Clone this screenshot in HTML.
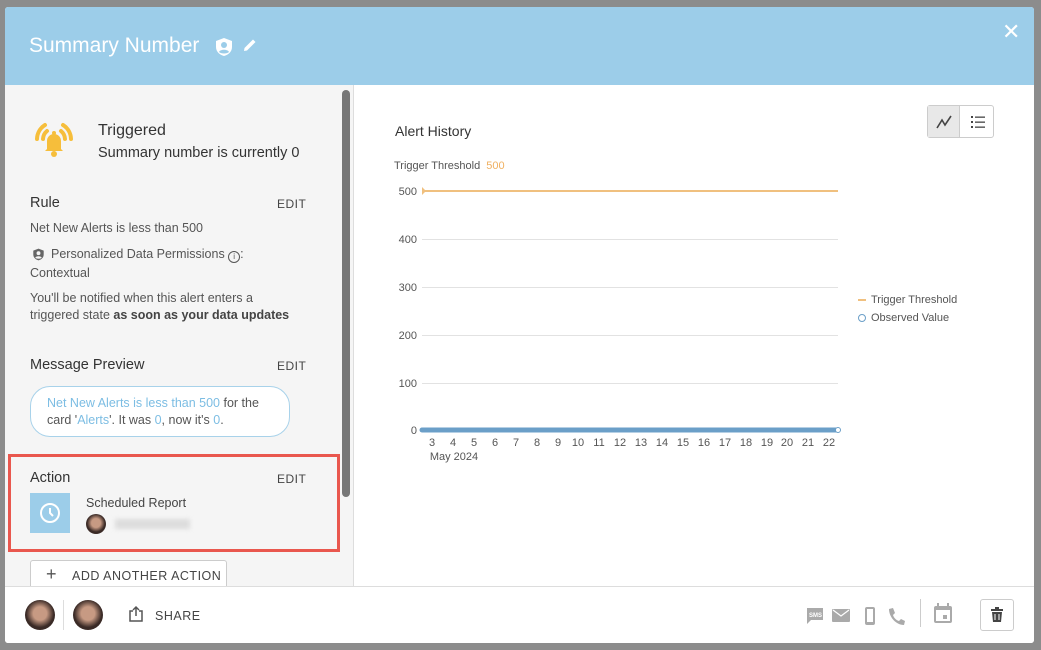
<!DOCTYPE html>
<html><head><meta charset="utf-8"><style>
*{margin:0;padding:0;box-sizing:border-box}
body{width:1041px;height:650px;background:#8c8c8c;font-family:"Liberation Sans",sans-serif;position:relative;overflow:hidden;color:#333}
.a{position:absolute;white-space:nowrap}
#m{position:absolute;left:5px;top:7px;width:1029px;height:636px;background:#fff;border-radius:3px;overflow:hidden}
#hd{position:absolute;left:0;top:0;width:1029px;height:78px;background:#9ccde9}
#lp{position:absolute;left:0;top:78px;width:349px;height:501px;background:#f5f5f5;border-right:1px solid #ddd}
#ft{position:absolute;left:0;top:579px;width:1029px;height:57px;background:#fff;border-top:1px solid #ddd}
.t{font-size:14.5px;color:#333}
.s{font-size:12.5px;color:#555}
.e{font-size:12px;color:#444;letter-spacing:.5px}
</style></head><body>
<div id="m">
 <div id="hd">
  <div class="a" style="left:24px;top:27px;font-size:21px;color:#fff">Summary Number</div>
  <svg class="a" style="left:209px;top:30px" width="20" height="20" viewBox="0 0 20 20"><path d="M10 1 L18 4 V10 C18 15 14 18 10 19 C6 18 2 15 2 10 V4Z" fill="#fff"/><circle cx="10" cy="8" r="3" fill="#9ccde9"/><path d="M5 15 C6 12 14 12 15 15 C13 17 7 17 5 15Z" fill="#9ccde9"/></svg>
  <svg class="a" style="left:237px;top:30px" width="16" height="16" viewBox="0 0 16 16"><path d="M2 14 L2.5 11 L11 2.5 L13.5 5 L5 13.5Z" fill="#fff"/></svg>
  <div class="a" style="left:997px;top:12px;font-size:22px;color:#fff">✕</div>
 </div>
 <div id="lp">
  <svg class="a" style="left:24px;top:32px" width="50" height="44" viewBox="0 0 50 44"><g fill="none" stroke="#f6be3b" stroke-width="4" stroke-linecap="round"><path d="M8 22 A17 17 0 0 1 16 8"/><path d="M42 22 A17 17 0 0 0 34 8"/><path d="M14 22 A11 11 0 0 1 18 14"/><path d="M36 22 A11 11 0 0 0 32 14"/></g><path d="M18 32 V24 A7 7 0 0 1 32 24 V32 L34 34 H16Z" fill="#f6be3b"/><circle cx="25" cy="37" r="3" fill="#f6be3b"/><circle cx="25" cy="16" r="2" fill="#f6be3b"/></svg>
  <div class="a" style="left:93px;top:37px;font-size:16px;color:#333">Triggered</div>
  <div class="a" style="left:93px;top:60px;font-size:14.5px;color:#333">Summary number is currently 0</div>
  <div class="a t" style="left:25px;top:110px">Rule</div>
  <div class="a e" style="left:272px;top:112px">EDIT</div>
  <div class="a s" style="left:25px;top:136px">Net New Alerts is less than 500</div>
  <svg class="a" style="left:27px;top:163px" width="13" height="13" viewBox="0 0 20 20"><path d="M10 1 L18 4 V10 C18 15 14 18 10 19 C6 18 2 15 2 10 V4Z" fill="#666"/><circle cx="10" cy="8" r="3" fill="#f5f5f5"/><path d="M5 15 C6 12 14 12 15 15 C13 17 7 17 5 15Z" fill="#f5f5f5"/></svg>
  <div class="a s" style="left:46px;top:162px">Personalized Data Permissions <span style="display:inline-block;width:12px;height:12px;border:1.3px solid #555;border-radius:50%;font-size:8px;text-align:center;line-height:10px;vertical-align:-1px">i</span>:</div>
  <div class="a s" style="left:25px;top:181px">Contextual</div>
  <div class="a s" style="left:25px;top:206px">You'll be notified when this alert enters a</div>
  <div class="a s" style="left:25px;top:223px">triggered state <b style="color:#444">as soon as your data updates</b></div>
  <div class="a t" style="left:25px;top:272px">Message Preview</div>
  <div class="a e" style="left:272px;top:274px">EDIT</div>
  <div class="a" style="left:25px;top:301px;width:260px;height:51px;border:1px solid #a8d2ea;border-radius:20px;background:#fff"></div>
  <div class="a s" style="left:42px;top:310px;line-height:17px">
   <span style="color:#7cbde3">Net New Alerts is less than 500</span> for the<br>card '<span style="color:#7cbde3">Alerts</span>'. It was <span style="color:#7cbde3">0</span>, now it's <span style="color:#7cbde3">0</span>.</div>
  <div class="a" style="left:3px;top:369px;width:332px;height:98px;border:3px solid #e9574e"></div>
  <div class="a t" style="left:25px;top:385px">Action</div>
  <div class="a e" style="left:272px;top:387px">EDIT</div>
  <div class="a" style="left:25px;top:408px;width:40px;height:40px;background:#9ccde9"></div>
  <svg class="a" style="left:33px;top:416px" width="24" height="24" viewBox="0 0 24 24"><circle cx="12" cy="12" r="9" fill="none" stroke="#fff" stroke-width="2"/><path d="M12 7 V12 L15 15" fill="none" stroke="#fff" stroke-width="2"/></svg>
  <div class="a s" style="left:81px;top:411px;color:#444">Scheduled Report</div>
  <div class="a" style="left:81px;top:429px;width:20px;height:20px;border-radius:50%;background:radial-gradient(circle at 50% 45%,#c79a83 30%,#3a2a26 60%)"></div>
  <div class="a" style="left:110px;top:434px;width:75px;height:10px;background:#ddd;filter:blur(2px)"></div>
  <div class="a" style="left:25px;top:475px;width:197px;height:30px;border:1px solid #ccc;border-radius:3px;background:#fff"></div>
  <div class="a" style="left:41px;top:479px;font-size:18px;color:#555">+</div>
  <div class="a e" style="left:67px;top:484px;font-size:12.5px">ADD ANOTHER ACTION</div>
  <div class="a" style="left:337px;top:5px;width:8px;height:407px;border-radius:4px;background:#777"></div>
 </div>
 <div class="a" style="left:390px;top:116px;font-size:14px;color:#333">Alert History</div>
 <div class="a" style="left:922px;top:98px;width:67px;height:33px;border:1px solid #ccc;border-radius:3px"></div>
 <div class="a" style="left:923px;top:99px;width:32px;height:31px;background:#e8e8e8;border-right:1px solid #ccc"></div>
 <svg class="a" style="left:929px;top:105px" width="20" height="20" viewBox="0 0 20 20"><path d="M3 16 L8 8 L11 13 L17 4" fill="none" stroke="#444" stroke-width="1.6"/></svg>
 <svg class="a" style="left:963px;top:105px" width="20" height="20" viewBox="0 0 20 20"><g fill="#444"><rect x="3" y="4" width="2" height="2"/><rect x="3" y="9" width="2" height="2"/><rect x="3" y="14" width="2" height="2"/><rect x="7" y="4.5" width="10" height="1.3"/><rect x="7" y="9.5" width="10" height="1.3"/><rect x="7" y="14.5" width="10" height="1.3"/></g></svg>
 <div class="a" style="left:389px;top:153px;font-size:11px;color:#555">Trigger Threshold <span style="color:#f0b060;margin-left:3px">500</span></div>
 <svg class="a" style="left:370px;top:163px" width="480" height="300" viewBox="375 170 480 300">
  <g stroke="#e2e2e2" stroke-width="1"><line x1="422" x2="838" y1="239.5" y2="239.5"/><line x1="422" x2="838" y1="287.5" y2="287.5"/><line x1="422" x2="838" y1="335.5" y2="335.5"/><line x1="422" x2="838" y1="383.5" y2="383.5"/></g>
  <g font-family="Liberation Sans" font-size="11" fill="#555" text-anchor="end"><text x="417" y="195">500</text><text x="417" y="243">400</text><text x="417" y="291">300</text><text x="417" y="339">200</text><text x="417" y="387">100</text><text x="417" y="434">0</text></g>
  <line x1="422" x2="838" y1="191" y2="191" stroke="#f0c07f" stroke-width="2"/>
  <path d="M422 187 L426 191 L422 195Z" fill="#f0c07f"/>
  <line x1="422" x2="838" y1="430" y2="430" stroke="#6b9fc8" stroke-width="5" stroke-linecap="round"/>
  <circle cx="838" cy="430" r="2.5" fill="#fff" stroke="#6b9fc8"/>
  <g font-family="Liberation Sans" font-size="11" fill="#555" text-anchor="middle">
   <text x="432" y="446">3</text><text x="453" y="446">4</text><text x="474" y="446">5</text><text x="495" y="446">6</text><text x="516" y="446">7</text><text x="537" y="446">8</text><text x="558" y="446">9</text><text x="578" y="446">10</text><text x="599" y="446">11</text><text x="620" y="446">12</text><text x="641" y="446">13</text><text x="662" y="446">14</text><text x="683" y="446">15</text><text x="704" y="446">16</text><text x="725" y="446">17</text><text x="746" y="446">18</text><text x="767" y="446">19</text><text x="787" y="446">20</text><text x="808" y="446">21</text><text x="829" y="446">22</text>
   <text x="454" y="460">May 2024</text></g>
 </svg>
 <div class="a" style="left:853px;top:292px;width:8px;height:2px;background:#f0c07f"></div>
 <div class="a" style="left:866px;top:287px;font-size:11px;color:#555">Trigger Threshold</div>
 <div class="a" style="left:853px;top:307px;width:8px;height:8px;border:1px solid #6b9fc8;border-radius:50%"></div>
 <div class="a" style="left:866px;top:305px;font-size:11px;color:#555">Observed Value</div>
 <div id="ft">
  <div class="a" style="left:20px;top:13px;width:30px;height:30px;border-radius:50%;background:radial-gradient(circle at 50% 45%,#c79a83 30%,#3a2a26 62%)"></div>
  <div class="a" style="left:58px;top:13px;width:1px;height:30px;background:#ddd"></div>
  <div class="a" style="left:68px;top:13px;width:30px;height:30px;border-radius:50%;background:radial-gradient(circle at 50% 45%,#c79a83 30%,#3a2a26 62%)"></div>
  <svg class="a" style="left:122px;top:18px" width="18" height="18" viewBox="0 0 18 18"><path d="M6 6 H3 V16 H15 V6 H12 M9 11 V2 M6 5 L9 2 L12 5" fill="none" stroke="#555" stroke-width="1.5"/></svg>
  <div class="a e" style="left:150px;top:22px;font-size:12.5px">SHARE</div>
  <svg class="a" style="left:800px;top:18px" width="120" height="22" viewBox="0 0 120 22"><g fill="#aaa"><path d="M2 3 H18 V15 H6 L2 19Z"/><rect x="27" y="4" width="18" height="13" rx="1"/><rect x="60" y="2" width="10" height="18" rx="2"/><path d="M84 4 L88 3 L90 8 L88 10 C89 13 91 15 94 16 L96 14 L100 16 L99 20 C91 20 84 12 84 4Z"/></g><path d="M28 5 L36 11 L44 5" fill="none" stroke="#fff" stroke-width="1.2"/><rect x="62" y="4" width="6" height="13" fill="#fff"/><text x="4" y="12" font-size="6" fill="#fff" font-family="Liberation Sans" font-weight="bold">SMS</text></svg>
  <div class="a" style="left:915px;top:12px;width:1px;height:28px;background:#ccc"></div>
  <svg class="a" style="left:928px;top:16px" width="20" height="22" viewBox="0 0 20 22"><rect x="1" y="3" width="18" height="17" rx="2" fill="#aaa"/><rect x="4" y="0" width="2" height="4" fill="#aaa"/><rect x="14" y="0" width="2" height="4" fill="#aaa"/><rect x="3" y="7" width="14" height="11" fill="#fff"/><rect x="10" y="12" width="4" height="4" fill="#aaa"/></svg>
  <div class="a" style="left:975px;top:12px;width:34px;height:32px;border:1px solid #ccc;border-radius:3px"></div>
  <svg class="a" style="left:985px;top:20px" width="14" height="16" viewBox="0 0 14 16"><rect x="1" y="2" width="12" height="2" fill="#444"/><rect x="5" y="0" width="4" height="2" fill="#444"/><path d="M2 5 H12 L11 15 H3Z" fill="#444"/><g stroke="#fff"><line x1="5" y1="7" x2="5" y2="13"/><line x1="9" y1="7" x2="9" y2="13"/></g></svg>
 </div>
</div>
</body></html>
